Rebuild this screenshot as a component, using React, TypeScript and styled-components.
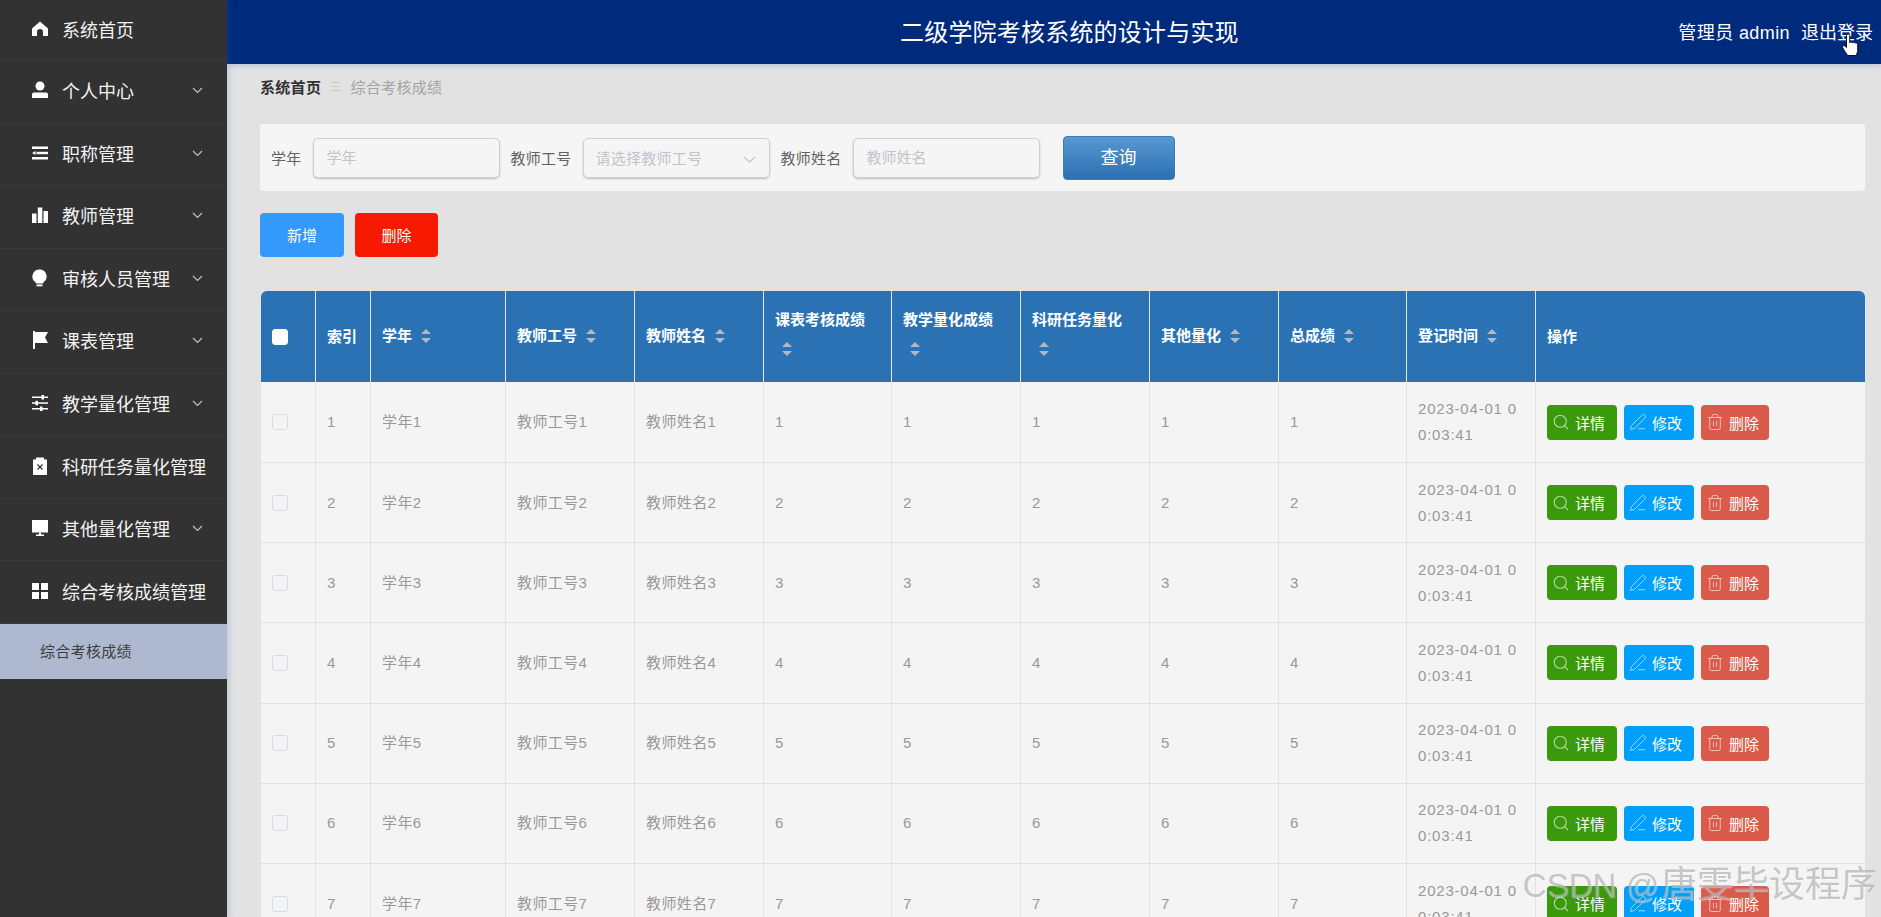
import React from "react";
import styled, { createGlobalStyle } from "styled-components";
import { Search, PenLine, Trash2 } from "lucide-react";

const Global = createGlobalStyle`
  html, body { margin: 0; padding: 0; height: 100%; overflow: hidden; }
  body { font-family: "Liberation Sans", "Noto Sans CJK SC", sans-serif; background: #e2e2e2; }
  * { box-sizing: border-box; }
`;

const Page = styled.div`
  display: flex;
  width: 100%;
  height: 100vh;
  overflow: hidden;
  position: relative;
`;

const Sidebar = styled.aside`
  flex: 0 0 227px;
  background: #323232;
  box-shadow: 2px 0 6px rgba(60, 110, 190, 0.22);
  position: relative;
  z-index: 2;
`;

const MenuItem = styled.div`
  display: flex;
  align-items: center;
  height: 62.56px;
  padding: 0 0 3px 32px;
  border-bottom: 1px solid #3b3b3b;
  color: #f2f2f2;
  font-size: 18px;
  white-space: nowrap;
  &:first-child { height: 61px; }
`;

const MenuIcon = styled.svg`
  flex: 0 0 16px;
  width: 16px;
  height: 18px;
  margin-right: 14px;
  fill: #fff;
`;

const MenuChevron = styled.svg`
  width: 11px;
  height: 6px;
  margin: 0 24px 0 auto;
  fill: none;
  stroke: #c4c4c4;
  stroke-width: 1.1;
`;

const SubItem = styled.div`
  display: flex;
  align-items: center;
  height: 55px;
  padding: 0 0 2px 40px;
  background: #aeb9d0;
  color: #3d3d3d;
  font-size: 15px;
  letter-spacing: 0.3px;
`;

const Main = styled.main`
  flex: 1;
  min-width: 0;
  background: #e2e2e2;
`;

const Header = styled.header`
  display: flex;
  align-items: center;
  height: 64px;
  padding: 0 8px 3px 673px;
  background: #002a7b;
  color: #fff;
  box-shadow: 0 2px 5px rgba(60, 110, 190, 0.22);
  position: relative;
`;

const Title = styled.h1`
  margin: 0;
  font-size: 24px;
  font-weight: 400;
  letter-spacing: 0.2px;
  white-space: nowrap;
`;

const UserBox = styled.div`
  display: flex;
  gap: 11px;
  margin-left: auto;
  font-size: 18px;
  white-space: nowrap;
  position: relative;
`;

const UserName = styled.span`
  letter-spacing: 0.4px;
`;

const HandCursor = styled.svg`
  position: absolute;
  left: 164px;
  top: 15px;
  width: 17px;
  height: 24px;
  fill: #fff;
  stroke: #111;
  stroke-width: 1;
`;

const Content = styled.div`
  padding: 13px 16px 0 33px;
`;

const Breadcrumb = styled.nav`
  display: flex;
  align-items: center;
  height: 18px;
  font-size: 15px;
  letter-spacing: 0.3px;
  color: #a3a3a3;
`;

const Crumb = styled.b`
  color: #303133;
`;

const CrumbSep = styled.span`
  margin: 0 9px 0 9px;
  color: #c4c4c4;
  font-size: 11px;
`;

const Filter = styled.section`
  display: flex;
  align-items: center;
  height: 67px;
  margin-top: 29px;
  padding-left: 11px;
  background: #f5f5f5;
  border-radius: 3px;
`;

const FieldLabel = styled.label`
  margin-right: 11px;
  color: #606266;
  font-size: 15px;
  letter-spacing: 0.25px;
  white-space: nowrap;
`;

const TextInput = styled.input`
  width: 187px;
  height: 40px;
  margin-right: 11px;
  padding: 0 13px;
  border: 1px solid #d0d0d0;
  border-radius: 5px;
  background: #f5f5f5;
  box-shadow: 0 1px 2px rgba(0, 0, 0, 0.22);
  font: 15px "Liberation Sans", "Noto Sans CJK SC", sans-serif;
  outline: none;
  &::placeholder { color: #c0c4cc; }
`;

const SelectBox = styled.div`
  display: flex;
  align-items: center;
  justify-content: space-between;
  width: 187px;
  height: 40px;
  margin-right: 11px;
  padding: 0 13px 0 12px;
  border: 1px solid #d0d0d0;
  border-radius: 5px;
  box-shadow: 0 1px 2px rgba(0, 0, 0, 0.22);
  color: #c0c4cc;
  font-size: 15px;
  letter-spacing: 0.25px;
`;

const SelectChevron = styled.svg`
  width: 13px;
  height: 7px;
  margin-top: 4px;
  fill: none;
  stroke: #c0c4cc;
  stroke-width: 1.1;
`;

const SearchButton = styled.button`
  width: 112px;
  height: 44px;
  margin-left: 12px;
  padding: 0 0 3px;
  border: 1px solid #3a7dbb;
  border-radius: 4px;
  background: linear-gradient(#5898d2, #2b70b1);
  color: #fff;
  font: 18px "Liberation Sans", "Noto Sans CJK SC", sans-serif;
`;

const Actions = styled.div`
  display: flex;
  gap: 11px;
  margin-top: 22px;
`;

const ActionLarge = styled.button<{ $bg: string; $w: number }>`
  width: ${(p) => p.$w}px;
  height: 44px;
  padding: 0 0 2px;
  border: 0;
  border-radius: 4px;
  background: ${(p) => p.$bg};
  color: #fff;
  font: 15px "Liberation Sans", "Noto Sans CJK SC", sans-serif;
`;

const TableWrap = styled.div`
  margin: 34px 0 0 1px;
  border-radius: 6px 6px 0 0;
  overflow: hidden;
`;

const Table = styled.table`
  width: 1604px;
  table-layout: fixed;
  border-collapse: separate;
  border-spacing: 0;
  font-size: 15px;
  tbody tr:first-child td { height: 81px; }
`;

const Th = styled.th`
  height: 91px;
  padding: 0 11px;
  background: #2a72b3;
  border-right: 1px solid #e4e4e4;
  color: #fff;
  font-weight: 700;
  text-align: left;
  line-height: 26px;
  word-spacing: -2px;
  &:last-child { border-right: 0; }
`;

const Td = styled.td<{ $date?: boolean }>`
  height: 80.2px;
  padding: 0 11px;
  background: #f4f4f4;
  border-right: 1px solid #e2e2e2;
  border-bottom: 1px solid #e2e2e2;
  color: #999;
  line-height: 26px;
  word-break: break-all;
  letter-spacing: ${(p) => (p.$date ? "0.8px" : "0.4px")};
  &:last-child { border-right: 0; }
`;

const Check = styled.span<{ $head?: boolean }>`
  display: block;
  width: 16px;
  height: 16px;
  border-radius: 3px;
  border: 1px solid ${(p) => (p.$head ? "#fff" : "#d8dbe0")};
  background: ${(p) => (p.$head ? "#fff" : "#f4f4f4")};
`;

const CaretWrap = styled.span`
  display: inline-block;
  position: relative;
  width: 24px;
  height: 34px;
  vertical-align: middle;
`;

const Caret = styled.i<{ $up?: boolean }>`
  position: absolute;
  left: 7px;
  border: 5.5px solid transparent;
  ${(p) =>
    p.$up
      ? "top: 4px; border-bottom-color: #b3b8c0;"
      : "bottom: 6px; border-top-color: #b3b8c0;"}
`;

const RowActions = styled.div`
  display: flex;
  gap: 7px;
`;

const tones = {
  green: { bg: "#3a9a0c", w: 70 },
  blue: { bg: "#00a0fa", w: 70 },
  red: { bg: "#da5b4b", w: 68 },
};

const RowButton = styled.button<{ $tone: keyof typeof tones }>`
  display: flex;
  align-items: center;
  gap: 5px;
  width: ${(p) => tones[p.$tone].w}px;
  height: 35px;
  padding: 0 0 0 5px;
  border: 0;
  border-radius: 4px;
  background: ${(p) => tones[p.$tone].bg};
  color: #fff;
  font: 15px "Liberation Sans", "Noto Sans CJK SC", sans-serif;
  svg { flex: 0 0 18px; opacity: 0.6; }
`;

const Watermark = styled.div`
  position: absolute;
  right: 4px;
  bottom: 7px;
  z-index: 5;
  color: rgba(165, 165, 165, 0.62);
  font-size: 36px;
  line-height: 48px;
  white-space: nowrap;
  text-shadow: 1px 1px 1px rgba(255, 255, 255, 0.45);
  pointer-events: none;
`;

const WatermarkLatin = styled.span`
  font-size: 33px;
  margin-right: 2px;
`;

const chevron = "M1 1l4.5 4.5L10 1";

const icons: Record<string, React.ReactNode> = {
  home: <path d="M8 1.5l8 7V16h-5v-4a3 3 0 0 0-6 0v4H0V8.500z" />,
  user: (
    <>
      <circle cx="8" cy="5" r="4.500" />
      <path d="M2 11.500h12a2 2 0 0 1 2 2V17H0v-3.500a2 2 0 0 1 2-2z" />
    </>
  ),
  fold: (
    <>
      <rect y="2.500" width="16" height="2.500" />
      <rect x="4.500" y="7.800" width="11.500" height="2.400" />
      <path d="M0 9l3.500-2v4z" />
      <rect y="13" width="16" height="2.500" />
    </>
  ),
  bars: (
    <>
      <rect y="7.500" width="4.500" height="9.500" />
      <rect x="5.800" y="1.500" width="4.500" height="15.500" />
      <rect x="11.500" y="5" width="4.500" height="12" />
    </>
  ),
  bulb: (
    <>
      <path d="M7.500 0.500a7 7 0 0 1 4 12.800l-.5 1.200H4l-.5-1.200a7 7 0 0 1 4-12.800z" />
      <rect x="4.500" y="15.500" width="6" height="1.800" />
    </>
  ),
  flag: (
    <>
      <rect x="1" y="0" width="2" height="18" />
      <path d="M3 1h13l-3 5.500 3 5.500H3z" />
    </>
  ),
  sliders: (
    <>
      <rect y="2.500" width="16" height="1.500" />
      <rect y="8.300" width="16" height="1.500" />
      <rect y="14" width="16" height="1.500" />
      <rect x="9.500" y="1" width="2.500" height="4.500" />
      <rect x="3.500" y="6.800" width="2.500" height="4.500" />
      <rect x="8" y="12.500" width="2.500" height="4.500" />
    </>
  ),
  clip: (
    <>
      <path d="M4 0.500h8v2h3v15.500H1V2.500h3z" />
      <path d="M5.500 7.500l5 5M10.500 7.500l-5 5" stroke="#333" strokeWidth="1.200" fill="none" />
    </>
  ),
  monitor: (
    <>
      <rect y="1" width="16" height="12.500" />
      <rect x="7" y="13.500" width="2" height="2.500" />
      <rect x="4" y="15.500" width="8" height="1.500" />
    </>
  ),
  grid: (
    <>
      <rect y="1" width="7" height="7" />
      <rect x="9" y="1" width="7" height="7" />
      <rect y="10" width="7" height="7" />
      <rect x="9" y="10" width="7" height="7" />
    </>
  ),
};

const menu = [
  { label: "系统首页", icon: "home", open: false },
  { label: "个人中心", icon: "user", open: true },
  { label: "职称管理", icon: "fold", open: true },
  { label: "教师管理", icon: "bars", open: true },
  { label: "审核人员管理", icon: "bulb", open: true },
  { label: "课表管理", icon: "flag", open: true },
  { label: "教学量化管理", icon: "sliders", open: true },
  { label: "科研任务量化管理", icon: "clip", open: false },
  { label: "其他量化管理", icon: "monitor", open: true },
  { label: "综合考核成绩管理", icon: "grid", open: false },
];

const columns = [
  { label: "学年", w: 135 },
  { label: "教师工号", w: 129 },
  { label: "教师姓名", w: 129 },
  { label: "课表考核成绩", w: 128 },
  { label: "教学量化成绩", w: 129 },
  { label: "科研任务量化", w: 129 },
  { label: "其他量化", w: 129 },
  { label: "总成绩", w: 128 },
  { label: "登记时间", w: 129 },
];

const rows = [1, 2, 3, 4, 5, 6, 7];

export default function App() {
  return (
    <Page>
      <Global />
      <Sidebar>
        {menu.map((m) => (
          <MenuItem key={m.label}>
            <MenuIcon viewBox="0 0 16 18">{icons[m.icon]}</MenuIcon>
            {m.label}
            {m.open && (
              <MenuChevron viewBox="0 0 11 6">
                <path d={chevron} />
              </MenuChevron>
            )}
          </MenuItem>
        ))}
        <SubItem>综合考核成绩</SubItem>
      </Sidebar>
      <Main>
        <Header>
          <Title>二级学院考核系统的设计与实现</Title>
          <UserBox>
            <UserName>管理员 admin</UserName>
            <span>退出登录</span>
            <HandCursor viewBox="0 0 17 23">
              <path d="M4.500 2a1.600 1.600 0 0 1 3.200 0v7.200c.4-.9 2.600-1 3 .1.400-.7 2.400-.8 2.800.4.500-.4 2-.3 2.200 1V17c0 2-1 3-1.500 5H5.500c-.5-1.500-1.500-2.500-3-4.500L.7 14c-.7-1.400 1-2.600 2.200-1.600l1.600 1.600z" />
            </HandCursor>
          </UserBox>
        </Header>
        <Content>
          <Breadcrumb>
            <Crumb>系统首页</Crumb>
            <CrumbSep>三</CrumbSep>
            综合考核成绩
          </Breadcrumb>
          <Filter>
            <FieldLabel>学年</FieldLabel>
            <TextInput placeholder="学年" />
            <FieldLabel>教师工号</FieldLabel>
            <SelectBox>
              请选择教师工号
              <SelectChevron viewBox="0 0 13 7">
                <path d="M1 1l5.500 5L12 1" />
              </SelectChevron>
            </SelectBox>
            <FieldLabel>教师姓名</FieldLabel>
            <TextInput placeholder="教师姓名" />
            <SearchButton>查询</SearchButton>
          </Filter>
          <Actions>
            <ActionLarge $bg="#3399fb" $w={84}>新增</ActionLarge>
            <ActionLarge $bg="#f71a00" $w={83}>删除</ActionLarge>
          </Actions>
          <TableWrap>
            <Table>
              <colgroup>
                <col width={55} />
                <col width={55} />
                {columns.map((c) => (
                  <col key={c.label} width={c.w} />
                ))}
                <col width={329} />
              </colgroup>
              <thead>
                <tr>
                  <Th><Check $head /></Th>
                  <Th>索引</Th>
                  {columns.map((c) => (
                    <Th key={c.label}>
                      {c.label}{" "}
                      <CaretWrap>
                        <Caret $up />
                        <Caret />
                      </CaretWrap>
                    </Th>
                  ))}
                  <Th>操作</Th>
                </tr>
              </thead>
              <tbody>
                {rows.map((n) => (
                  <tr key={n}>
                    <Td><Check /></Td>
                    <Td>{n}</Td>
                    <Td>学年{n}</Td>
                    <Td>教师工号{n}</Td>
                    <Td>教师姓名{n}</Td>
                    <Td>{n}</Td>
                    <Td>{n}</Td>
                    <Td>{n}</Td>
                    <Td>{n}</Td>
                    <Td>{n}</Td>
                    <Td $date>2023-04-01 00:03:41</Td>
                    <Td>
                      <RowActions>
                        <RowButton $tone="green"><Search size={18} strokeWidth={1.5} />详情</RowButton>
                        <RowButton $tone="blue"><PenLine size={18} strokeWidth={1.3} />修改</RowButton>
                        <RowButton $tone="red"><Trash2 size={18} strokeWidth={1.3} />删除</RowButton>
                      </RowActions>
                    </Td>
                  </tr>
                ))}
              </tbody>
            </Table>
          </TableWrap>
        </Content>
      </Main>
      <Watermark><WatermarkLatin>CSDN @</WatermarkLatin>唐雯毕设程序</Watermark>
    </Page>
  );
}
